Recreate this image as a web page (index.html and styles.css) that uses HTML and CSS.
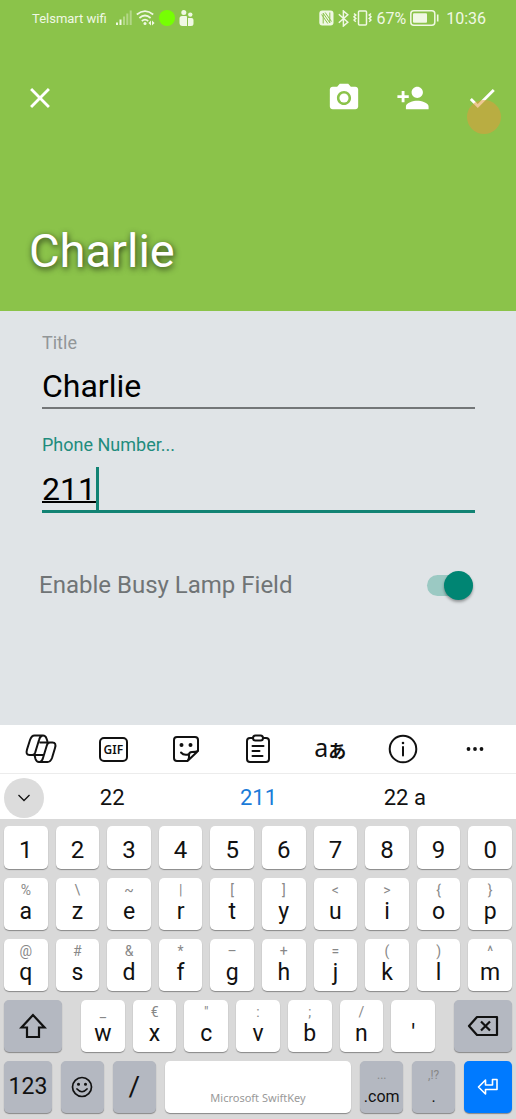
FILE: index.html
```html
<!DOCTYPE html>
<html lang="en">
<head>
<meta charset="utf-8">
<meta name="viewport" content="width=device-width, initial-scale=1">
<title>Charlie</title>
<link rel="stylesheet" href="styles.css">
</head>
<body>
<header class="hero">
  <div class="status">
    <div class="status-side">
      <span class="carrier">Telsmart wifi</span>
      <svg class="signal" width="16" height="16" viewBox="0 0 16 16" fill="currentColor"><rect x="0" y="12.500" width="2" height="2.500"/><rect x="3.500" y="9.500" width="2" height="5.500"/><g opacity=".4"><rect x="7" y="6.500" width="2" height="8.500"/><rect x="10.300" y="3.500" width="2" height="11.500"/><rect x="13.700" y="0.500" width="2" height="14.500"/></g></svg>
      <svg width="19" height="16" viewBox="0 0 19 16" fill="none" stroke="currentColor" stroke-width="1.700"><path d="M.8 4.500Q9 -2.300 17.200 4.500M3.400 8Q9 3 14.600 8M5.800 11Q9 8.300 12.200 11"/><circle cx="9" cy="13.600" r="1.500" fill="currentColor" stroke="none"/><path d="M15 10.500v5l-2.600-2.500zM16 10.500v5l2.600-2.500z" fill="currentColor" stroke="none"/></svg>
      <span class="live-dot"></span>
      <svg width="15" height="17" viewBox="0 0 15 17" fill="currentColor"><circle cx="4.800" cy="2.600" r="2.500"/><circle cx="11.300" cy="4.600" r="2.200"/><path d="M3 6h4q1 0 1 1v9H3.500Q.5 16 .5 13V8.500Q.5 6 3 6zM9 8h3.500q2 0 2 2v3.500q0 2.500-2.500 2.500H9z"/></svg>
    </div>
    <div class="status-side">
      <svg width="15" height="16" viewBox="0 0 15 16"><rect x=".3" y=".5" width="14.200" height="15" rx="3" fill="currentColor"/><path d="M4.200 13.500V3.200L10.800 12.800V2.500M6.200 2.500L12.500 11.500M2.600 4.500L8.800 13.500" fill="none" stroke="#8bc34a" stroke-width="1"/></svg>
      <svg width="11" height="17" viewBox="0 0 11 17" fill="none" stroke="currentColor" stroke-width="1.500"><path d="M.8 4.300l9 8L5.400 16V1l4.400 3.700-9 8"/></svg>
      <svg width="19" height="16" viewBox="0 0 19 16" fill="none" stroke="currentColor" stroke-width="1.500"><rect x="5.500" y="1" width="8" height="14" rx="1"/><path d="M1 3.500l1.800 1.600L1 6.800l1.800 1.600L1 10l1.800 1.800M18 3.500l-1.800 1.600L18 6.800l-1.800 1.600L18 10l-1.800 1.800"/></svg>
      <span class="percent">67%</span>
      <svg width="29" height="16" viewBox="0 0 29 16"><rect x=".8" y=".8" width="24" height="14.400" rx="3" fill="none" stroke="currentColor" stroke-width="1.500"/><rect x="3" y="3.200" width="14" height="9.600" rx="1" fill="currentColor"/><path d="M27.700 4.500v7" stroke="currentColor" stroke-width="1.600"/></svg>
      <span class="clock">10:36</span>
    </div>
  </div>
  <nav class="actions">
    <button class="action" aria-label="Close"><svg width="34" height="34" viewBox="0 0 24 24" fill="currentColor"><path d="M19 6.400L17.600 5 12 10.600 6.400 5 5 6.400 10.600 12 5 17.600 6.400 19 12 13.400 17.600 19 19 17.600 13.400 12z"/></svg></button>
    <div class="action-group">
      <button class="action" aria-label="Take photo"><svg width="34" height="34" viewBox="0 0 24 24" fill="currentColor"><circle cx="12" cy="12" r="3.200"/><path d="M9 2L7.170 4H4c-1.100 0-2 .9-2 2v12c0 1.100.9 2 2 2h16c1.100 0 2-.9 2-2V6c0-1.100-.9-2-2-2h-3.170L15 2H9zm3 15c-2.760 0-5-2.240-5-5s2.240-5 5-5 5 2.240 5 5-2.240 5-5 5z"/></svg></button>
      <button class="action" aria-label="Add contact"><svg width="34" height="34" viewBox="0 0 24 24" fill="currentColor"><path d="M15 12c2.210 0 4-1.790 4-4s-1.790-4-4-4-4 1.790-4 4 1.790 4 4 4zm-9-2V7H4v3H1v2h3v3h2v-3h3v-2H6zm9 4c-2.670 0-8 1.340-8 4v2h16v-2c0-2.660-5.330-4-8-4z"/></svg></button>
      <button class="action" aria-label="Save"><svg width="34" height="34" viewBox="0 0 24 24" fill="currentColor"><path d="M9 16.170L4.830 12l-1.420 1.410L9 19 21 7l-1.410-1.410z"/></svg><span class="touch"></span></button>
    </div>
  </nav>
  <h1 class="name">Charlie</h1>
</header>

<main class="form">
  <div class="field">
    <label class="label" for="title">Title</label>
    <div class="control"><input class="input" id="title" type="text" value="Charlie"></div>
  </div>
  <div class="field focused">
    <label class="label" for="phone">Phone Number...</label>
    <div class="control"><input class="input composing" id="phone" type="text" value="211"><span class="caret"></span></div>
  </div>
  <div class="toggle-row">
    <label for="blf">Enable Busy Lamp Field</label>
    <input class="switch" id="blf" type="checkbox" role="switch" checked>
  </div>
</main>

<section class="keyboard" aria-label="Keyboard">
  <div class="tools">
    <button class="tool" aria-label="Copilot"><svg width="34" height="32" viewBox="0 0 34 32" fill="none" stroke="currentColor" stroke-width="2" stroke-linejoin="round"><path d="M10.500 2.500H19q2.500 0 3.500 3l1 3M10.500 2.500Q7.500 2.500 6 7L3 16.500Q1.400 22 5.500 22H10M18.500 2.800Q16 3 15 7l-3.800 12.500Q10.300 22 8 22M23.500 29H15q-2.500 0-3.500-3l-1-4M23.500 29Q26.500 29 28 25l3-10Q32.600 9.500 28.500 9.500H24M15.500 29q2.500 0 3.500-4l3.800-12.500Q23.700 9.500 26 9.500M15.500 9.500H24M10 22h9.500"/></svg></button>
    <button class="tool" aria-label="GIF"><span class="gif">GIF</span></button>
    <button class="tool" aria-label="Stickers"><svg width="28" height="28" viewBox="0 0 28 28" fill="none" stroke="currentColor" stroke-width="2" stroke-linejoin="round" stroke-linecap="round"><path d="M15.500 26H5q-3 0-3-3V5q0-3 3-3h18q3 0 3 3v11zM15.500 26q2-2 1.500-6 0-3 3-3 4 0 6-1M9 17.500q2.500 3 7 2"/><circle cx="9.500" cy="10" r="1" fill="currentColor"/><circle cx="18.500" cy="10" r="1" fill="currentColor"/></svg></button>
    <button class="tool" aria-label="Clipboard"><svg width="26" height="30" viewBox="0 0 26 30" fill="none" stroke="currentColor" stroke-width="2" stroke-linejoin="round" stroke-linecap="round"><path d="M8 4H5Q2 4 2 7v18q0 3 3 3h16q3 0 3-3V7q0-3-3-3h-3M7.500 12h11M7.500 17h7M7.500 22h10"/><rect x="8" y="1.500" width="10" height="5" rx="2.500"/></svg></button>
    <button class="tool" aria-label="Translate"><span class="latin">a</span><span class="kana">あ</span></button>
    <button class="tool" aria-label="Information"><svg width="30" height="30" viewBox="0 0 30 30" fill="none" stroke="currentColor" stroke-width="2" stroke-linecap="round"><circle cx="15" cy="15" r="13.300"/><path d="M15 13v8.500"/><circle cx="15" cy="9" r=".7" fill="currentColor" stroke-width="1.200"/></svg></button>
    <button class="tool" aria-label="More"><svg width="18" height="6" viewBox="0 0 18 6" fill="currentColor"><circle cx="2.500" cy="3" r="1.900"/><circle cx="9" cy="3" r="1.900"/><circle cx="15.500" cy="3" r="1.900"/></svg></button>
  </div>
  <div class="suggestions">
    <button class="collapse" aria-label="Collapse"><svg width="14" height="8" viewBox="0 0 14 8" fill="none" stroke="currentColor" stroke-width="1.300"><path d="M1.500 1L7 6.500 12.500 1"/></svg></button>
    <button class="word">22</button>
    <button class="word best">211</button>
    <button class="word">22 a</button>
  </div>
  <div class="keys">
    <div class="row digits">
      <button class="key">1</button><button class="key">2</button><button class="key">3</button><button class="key">4</button><button class="key">5</button><button class="key">6</button><button class="key">7</button><button class="key">8</button><button class="key">9</button><button class="key">0</button>
    </div>
    <div class="row">
      <button class="key"><span class="hint">%</span>a</button><button class="key"><span class="hint">\</span>z</button><button class="key"><span class="hint">~</span>e</button><button class="key"><span class="hint">|</span>r</button><button class="key"><span class="hint">[</span>t</button><button class="key"><span class="hint">]</span>y</button><button class="key"><span class="hint">&lt;</span>u</button><button class="key"><span class="hint">&gt;</span>i</button><button class="key"><span class="hint">{</span>o</button><button class="key"><span class="hint">}</span>p</button>
    </div>
    <div class="row">
      <button class="key"><span class="hint">@</span>q</button><button class="key"><span class="hint">#</span>s</button><button class="key"><span class="hint">&amp;</span>d</button><button class="key"><span class="hint">*</span>f</button><button class="key"><span class="hint">–</span>g</button><button class="key"><span class="hint">+</span>h</button><button class="key"><span class="hint">=</span>j</button><button class="key"><span class="hint">(</span>k</button><button class="key"><span class="hint">)</span>l</button><button class="key"><span class="hint">^</span>m</button>
    </div>
    <div class="row third">
      <button class="key dark center" aria-label="Shift"><svg width="28" height="26" viewBox="0 0 28 26" fill="none" stroke="currentColor" stroke-width="2.200"><path d="M14 2L2.500 14.500H8V24h12v-9.500h5.500z"/></svg></button>
      <div class="row">
        <button class="key"><span class="hint">_</span>w</button><button class="key"><span class="hint">€</span>x</button><button class="key"><span class="hint">"</span>c</button><button class="key"><span class="hint">:</span>v</button><button class="key"><span class="hint">;</span>b</button><button class="key"><span class="hint">/</span>n</button><button class="key"><span class="hint"></span>'</button>
      </div>
      <button class="key dark center" aria-label="Backspace"><svg width="32" height="22" viewBox="0 0 32 22" fill="none" stroke="currentColor" stroke-width="2.200" stroke-linejoin="round"><path d="M10 2h20v18H10l-8-9zM14 6.500l9 9M23 6.500l-9 9"/></svg></button>
    </div>
    <div class="row bottom">
      <button class="key dark center">123</button>
      <button class="key dark center" aria-label="Emoji"><svg width="22" height="22" viewBox="0 0 22 22" fill="none" stroke="currentColor" stroke-width="1.700" stroke-linecap="round"><circle cx="11" cy="11" r="9.500"/><path d="M6 13q5 5.500 10 0"/><circle cx="7.500" cy="8.300" r=".7" fill="currentColor"/><circle cx="14.500" cy="8.300" r=".7" fill="currentColor"/></svg></button>
      <button class="key dark center slash">/</button>
      <button class="key space">Microsoft SwiftKey</button>
      <button class="key dark small"><span class="hint">...</span>.com</button>
      <button class="key dark small"><span class="hint">,!?</span>.</button>
      <button class="key enter center" aria-label="Enter"><svg width="22" height="18" viewBox="0 0 22 18" fill="none" stroke="currentColor" stroke-width="1.600" stroke-linejoin="round"><path d="M15.500 1.500H20v10H8.500V16L1.500 9l7-7v5h7z"/></svg></button>
    </div>
  </div>
</section>
</body>
</html>
```
FILE: styles.css
```css
* {
  box-sizing: border-box;
}

body {
  margin: 0;
  min-height: 100vh;
  display: flex;
  flex-direction: column;
  background: #e0e4e7;
  color: #111;
  font-family: Roboto, "Noto Sans", sans-serif;
}

button,
input {
  font: inherit;
  color: inherit;
  background: none;
  border: 0;
  border-radius: 0;
  margin: 0;
  padding: 0;
  outline: 0;
}

svg {
  display: block;
  flex: none;
}

/* Header */

.hero {
  background: #8bc34a;
  color: #fff;
  padding-bottom: 32px;
}

.status {
  display: flex;
  justify-content: space-between;
  height: 36px;
  padding: 0 30px 0 32px;
  color: #f0f8e4;
}

.status-side {
  display: flex;
  align-items: center;
  gap: 4px;
}

.carrier {
  font-size: 13px;
}

.signal {
  margin-left: 5px;
}

.live-dot {
  width: 16px;
  height: 16px;
  border-radius: 50%;
  background: #76ff03;
}

.percent,
.clock {
  font-size: 16px;
}

.clock {
  margin-left: 3px;
}

.actions {
  display: flex;
  justify-content: space-between;
  padding: 45px 17px 0 23px;
}

.action-group {
  display: flex;
  gap: 35px;
}

.action {
  position: relative;
}

.touch {
  position: absolute;
  top: 19px;
  right: -2px;
  width: 34px;
  height: 34px;
  border-radius: 50%;
  background: rgba(224, 154, 60, 0.55);
}

.name {
  margin: 108px 29px 0;
  font-size: 47px;
  line-height: 56px;
  font-weight: 400;
  text-shadow: 1px 2px 6px rgba(0, 0, 0, 0.7);
}

/* Form */

.form {
  flex: 1;
  padding: 22px 41px 0 42px;
}

.field {
  margin-bottom: 26px;
}

.label {
  display: block;
  font-size: 18px;
  line-height: 20px;
  color: #929698;
}

.control {
  display: flex;
  align-items: center;
  height: 56px;
  padding-top: 12px;
  border-bottom: 2px solid #737678;
}

.input {
  flex: 1;
  min-width: 0;
  height: 42px;
  font-size: 32px;
  color: #000;
}

.focused .label {
  color: #1f8c7d;
}

.focused .control {
  height: 58px;
  border-bottom: 3px solid #128374;
}

.composing {
  flex: none;
  width: 3ch;
  text-decoration: underline;
  text-decoration-thickness: 2px;
}

.caret {
  width: 3px;
  height: 43px;
  background: #128374;
}

.toggle-row {
  display: flex;
  align-items: center;
  justify-content: space-between;
  margin: 56px 2px 0 -3px;
  font-size: 24px;
  line-height: 32px;
  color: #707476;
}

.switch {
  appearance: none;
  display: flex;
  align-items: center;
  justify-content: flex-end;
  width: 46px;
  height: 21px;
  border-radius: 11px;
  background: #9bc9c3;
}

.switch::before {
  content: "";
  width: 29px;
  height: 29px;
  flex: none;
  border-radius: 50%;
  background: #008573;
  box-shadow: 0 2px 3px rgba(0, 0, 0, 0.35);
}

.switch:not(:checked) {
  justify-content: flex-start;
}

/* Keyboard */

.keyboard {
  background: #fff;
}

.tools {
  display: flex;
  height: 49px;
  padding: 0 5px;
  border-bottom: 1px solid #ececec;
}

.tool {
  flex: 1;
  display: flex;
  align-items: center;
  justify-content: center;
}

.gif {
  width: 29px;
  height: 25px;
  border: 2px solid #111;
  border-radius: 5px;
  font: 600 12px/21px "Noto Sans", sans-serif;
}

.latin {
  font: 400 25px/28px "Noto Sans", sans-serif;
  padding-bottom: 5px;
}

.kana {
  font: 700 18px/20px "Noto Sans CJK JP", sans-serif;
  padding-top: 2px;
}

.suggestions {
  display: flex;
  align-items: center;
  height: 45px;
  padding: 2px 38px 0 4px;
}

.collapse {
  display: flex;
  align-items: center;
  justify-content: center;
  width: 40px;
  height: 40px;
  margin-right: -5px;
  border-radius: 50%;
  background: #dcdcdc;
}

.word {
  flex: 1;
  font-size: 22px;
}

.best {
  color: #1a7bd8;
}

.keys {
  display: flex;
  flex-direction: column;
  gap: 9px;
  padding: 7px 4px 6px;
  background: #d9d9d9;
}

.row {
  display: grid;
  grid-auto-flow: column;
  grid-auto-columns: 1fr;
  gap: 8px;
}

.third {
  grid-template-columns: 58fr 354fr 58fr;
  gap: 19px;
}

.bottom {
  grid-template-columns: 48fr 43fr 43fr 187fr 43fr 43fr 48fr;
  gap: 9px;
}

.key {
  display: flex;
  flex-direction: column;
  align-items: center;
  height: 52px;
  padding-top: 5px;
  border-radius: 5px;
  background: #fff;
  box-shadow: 0 1px 1px #888;
  font-size: 23px;
  line-height: 24px;
}

.digits .key {
  height: 43px;
  padding-top: 12px;
  font-size: 24px;
}

.hint {
  height: 17px;
  font-size: 14px;
  line-height: 15px;
  color: #888;
}

.center {
  justify-content: center;
  padding: 0;
}

.dark {
  background: #b4b8c1;
}

.slash {
  font-size: 28px;
}

.space {
  justify-content: flex-end;
  padding-bottom: 3px;
  font: 11px/24px "Noto Sans", sans-serif;
  color: #999;
}

.small {
  padding-top: 7px;
  font-size: 16px;
}

.small .hint {
  font-size: 12px;
}

.enter {
  background: #007aff;
  color: #fff;
}
```
